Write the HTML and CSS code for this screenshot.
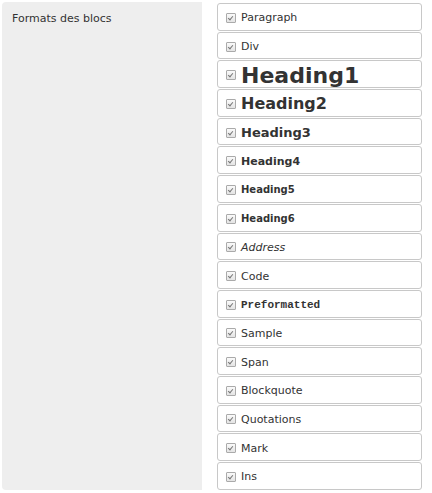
FILE: index.html
```html
<!DOCTYPE html>
<html>
<head>
<meta charset="utf-8">
<link rel="stylesheet" href="styles.css">
</head>
<body>
<div class="row">
  <div class="label">Formats des blocs</div>
  <div class="list">
    <div class="item"><span class="cb"></span><span class="t">Paragraph</span></div>
    <div class="item"><span class="cb"></span><span class="t">Div</span></div>
    <div class="item"><span class="cb"></span><span class="t h1">Heading1</span></div>
    <div class="item"><span class="cb"></span><span class="t h2">Heading2</span></div>
    <div class="item"><span class="cb"></span><span class="t h3">Heading3</span></div>
    <div class="item"><span class="cb"></span><span class="t h4">Heading4</span></div>
    <div class="item"><span class="cb"></span><span class="t h5">Heading5</span></div>
    <div class="item"><span class="cb"></span><span class="t h6">Heading6</span></div>
    <div class="item"><span class="cb"></span><span class="t addr">Address</span></div>
    <div class="item"><span class="cb"></span><span class="t">Code</span></div>
    <div class="item"><span class="cb"></span><span class="t pre">Preformatted</span></div>
    <div class="item"><span class="cb"></span><span class="t">Sample</span></div>
    <div class="item"><span class="cb"></span><span class="t">Span</span></div>
    <div class="item"><span class="cb"></span><span class="t">Blockquote</span></div>
    <div class="item"><span class="cb"></span><span class="t">Quotations</span></div>
    <div class="item"><span class="cb"></span><span class="t">Mark</span></div>
    <div class="item"><span class="cb"></span><span class="t">Ins</span></div>
  </div>
</div>
</body>
</html>
```
FILE: styles.css
```css
html, body {
  margin: 0;
  padding: 0;
  background: #fff;
}
body {
  padding: 2px;
  font-family: "DejaVu Sans", Verdana, sans-serif;
  color: #333;
}
.row {
  display: flex;
  align-items: stretch;
}
.label {
  width: 200px;
  box-sizing: border-box;
  background: #eee;
  border-radius: 4px 0 0 4px;
  padding: 10px 10px;
  font-size: 11px;
  color: #333;
  height: 488px;
}
.list {
  margin-left: 15px;
  padding-top: 1px;
  width: 205px;
  display: flex;
  flex-direction: column;
  gap: 1px;
}
.item {
  box-sizing: border-box;
  height: 27.7px;
  border: 1px solid #c8c8c8;
  border-radius: 3px;
  display: flex;
  align-items: center;
  padding-left: 8px;
  padding-top: 2px;
  background: #fff;
}
.cb {
  position: relative;
  width: 8px;
  height: 8px;
  border: 1px solid #aaa;
  border-radius: 1px;
  background: linear-gradient(#fafafa, #e4e4e4);
  flex: none;
  margin-right: 5px;
}
.cb::after {
  content: "";
  position: absolute;
  left: 2px;
  top: 1px;
  width: 2px;
  height: 4px;
  border: solid #777;
  border-width: 0 1.2px 1.2px 0;
  transform: rotate(40deg);
}
.t {
  font-size: 11px;
  color: #333;
  white-space: nowrap;
}
.h1 { font-size: 22px; font-weight: bold; }
.h2 { font-size: 16px; font-weight: bold; }
.h3 { font-size: 13px; font-weight: bold; }
.h4 { font-size: 11px; font-weight: bold; }
.h5 { font-size: 10px; font-weight: bold; }
.h6 { font-size: 10px; font-weight: bold; }
.addr { font-style: italic; }
.pre { font-family: "Liberation Mono", "Courier New", monospace; font-size: 11px; font-weight: bold; }
```
